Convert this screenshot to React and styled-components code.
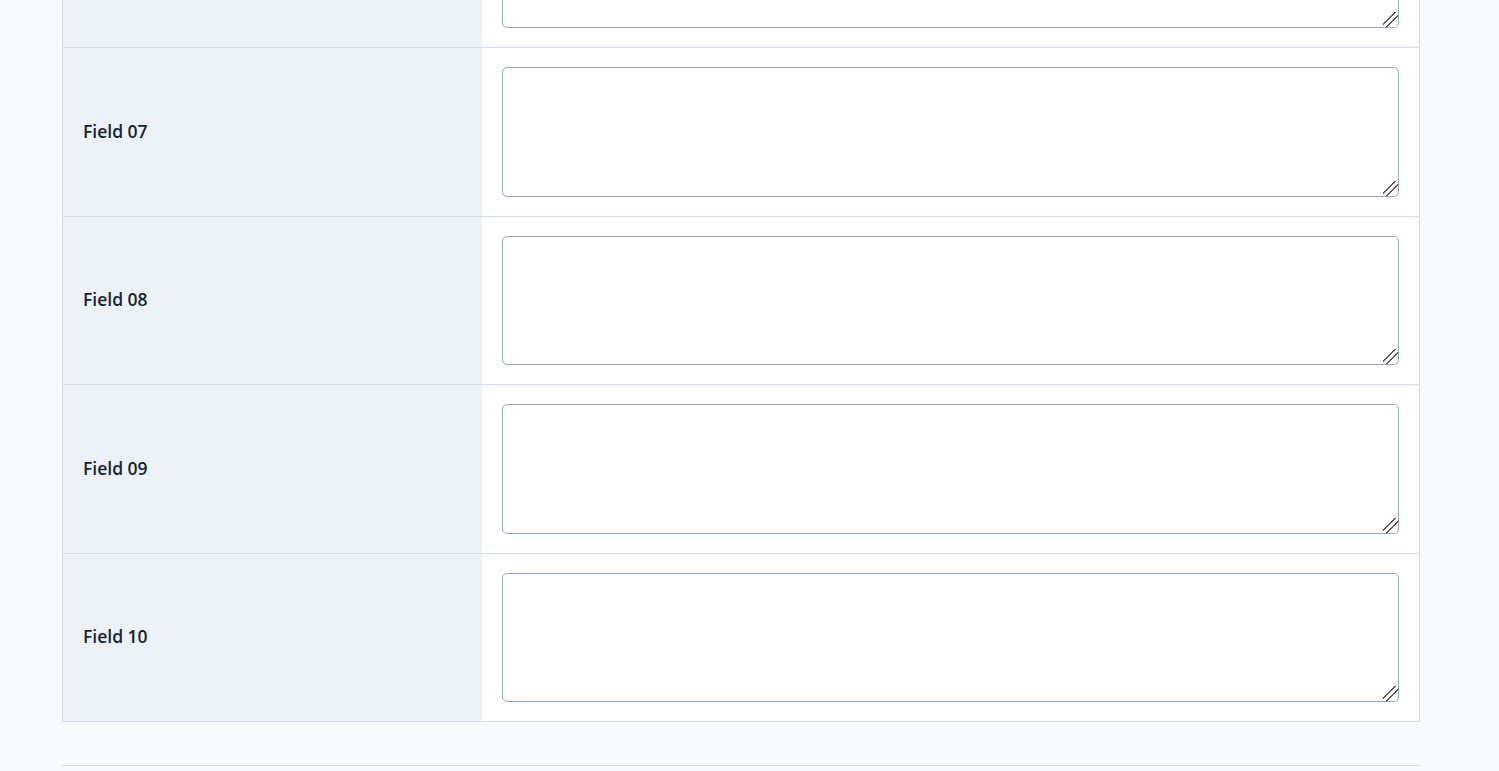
import React from 'react';
import styled, { createGlobalStyle } from 'styled-components';

const GlobalStyle = createGlobalStyle`
  html, body {
    margin: 0;
    padding: 0;
    background-color: #f8fafc;
    font-family: "Open Sans", Lato, sans-serif;
    overflow: hidden;
  }
`;

const Page = styled.div`
  padding: 0 0 40px 62px;
`;

const Container = styled.div`
  width: 1358px;
  margin-top: -121.5px;
`;

const FieldTable = styled.table`
  width: 100%;
  border-collapse: collapse;
  background-color: #ffffff;
  border: 1px solid #d3dbe6;
`;

const Row = styled.tr`
  border-top: 1px solid #d3dde9;
`;

const LabelCell = styled.th`
  width: 379px;
  padding: 0 20px 2px;
  background-color: #edf1f8;
  text-align: left;
  vertical-align: middle;
  font-size: 17.5px;
  font-weight: 600;
  color: #142438;
`;

const ValueCell = styled.td`
  padding: 19px 20px;
  vertical-align: top;
`;

const TextArea = styled.textarea`
  display: block;
  box-sizing: border-box;
  width: 100%;
  height: 129.5px;
  margin: 0;
  border: 1px solid #95a9c5;
  border-radius: 5px;
  background: #ffffff;
  font-family: inherit;
  font-size: 15px;
  resize: vertical;
  outline: none;

  &::-webkit-resizer {
    background: linear-gradient(
      135deg,
      transparent 0%,
      transparent 38%,
      #5a5a5a 38%,
      #5a5a5a 46%,
      transparent 46%,
      transparent 58%,
      #5a5a5a 58%,
      #5a5a5a 66%,
      transparent 66%
    );
  }
`;

const Divider = styled.hr`
  width: 1358px;
  margin: 43px 0 0 0;
  border: 0;
  border-top: 1px solid #d5dde8;
`;

const fields = ['06', '07', '08', '09', '10'];

const App = () => {
  return (
    <Page>
      <GlobalStyle />
      <Container>
        <FieldTable>
          <tbody>
            {fields.map(n => (
              <Row key={n}>
                <LabelCell>Field {n}</LabelCell>
                <ValueCell>
                  <TextArea name={`field_${n}`} />
                </ValueCell>
              </Row>
            ))}
          </tbody>
        </FieldTable>
        <Divider />
      </Container>
    </Page>
  );
};

export default App;
